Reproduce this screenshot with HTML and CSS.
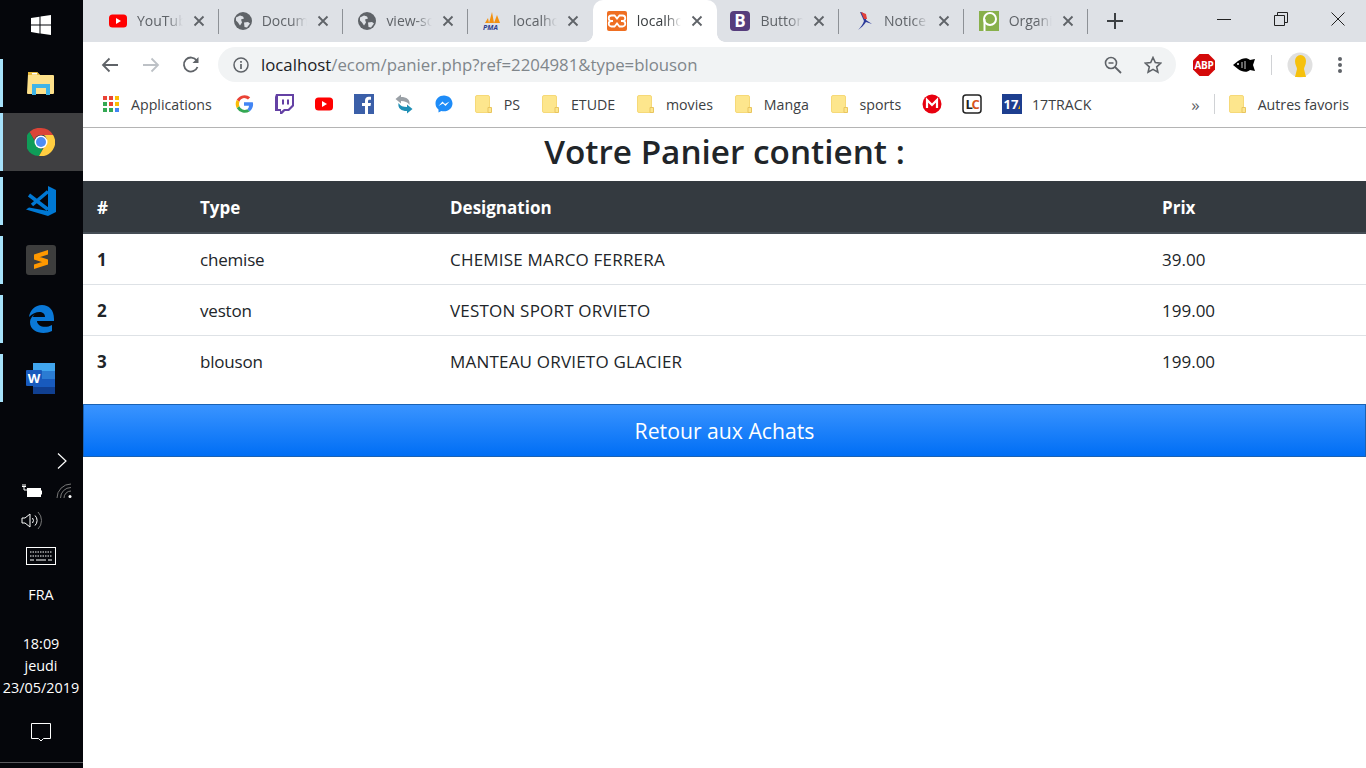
FILE: index.html
```html
<!DOCTYPE html>
<html lang="fr">
<head>
    <meta charset="UTF-8">
    <meta name="viewport" content="width=device-width, initial-scale=1.0">
    <title>Panier</title>
    <link rel="stylesheet" href="styles.css">
</head>
<body>
    <svg class="sprite" aria-hidden="true">
        <symbol id="i-folder" viewBox="0 0 20 20">
            <path d="M3 1.500h11a1.500 1.500 0 0 1 1.500 1.500v14a1.500 1.500 0 0 1-1.500 1.500h-11a1.500 1.500 0 0 1-1.500-1.500v-14a1.500 1.500 0 0 1 1.500-1.500z" fill="#fde68d" stroke="#f6d978"/>
            <path d="M14 13.500h3.500v5h-3.500z" fill="#fde68d" stroke="#e9c55f"/>
        </symbol>
        <symbol id="i-globe" viewBox="0 0 18 18">
            <circle cx="9" cy="9" r="9" fill="#5f6368"/>
            <path d="M2 5.500l4-2 3 1 1 2-3 1 1 3-2 3-2-3-2-2zM10 10.500l4-.5 2 1.500-3 4-2.500-.5z" fill="#dee1e6"/>
        </symbol>
        <symbol id="i-close" viewBox="0 0 12 12">
            <path d="M1.500 1.500l9 9M10.500 1.500l-9 9" stroke="#5f6368" stroke-width="1.800" fill="none"/>
        </symbol>
        <symbol id="i-yt" viewBox="0 0 18 14">
            <rect width="18" height="13" y=".5" rx="3.500" fill="#f00"/>
            <path d="M7 4l5 3-5 3z" fill="#fff"/>
        </symbol>
    </svg>

    <aside class="taskbar">
        <div class="start-btn">
            <svg width="20" height="20" viewBox="0 0 20 20"><path d="M0 3l8.500-1.300v7.900h-8.500zM9.500 1.500l10.500-1.500v9.600h-10.500zM0 10.500h8.500v7.900l-8.500-1.300zM9.500 10.500h10.500v9.500l-10.500-1.500z" fill="#fff"/></svg>
        </div>
        <div class="task-item">
            <svg width="28" height="24" viewBox="0 0 28 24"><path d="M1 3a2 2 0 0 1 2-2h7l3 3h13a1 1 0 0 1 1 1v17a1 1 0 0 1-1 1h-25a1 1 0 0 1-1-1z" fill="#fde08a"/><path d="M1 1h9l3 3h-12z" fill="#e7b93c"/><path d="M5 2h5v1.500h-5z" fill="#fff"/><path d="M5 24v-11l9-0 9 0v11h-4v-7h-10v7z" fill="#3fb4e8"/></svg>
        </div>
        <div class="task-item is-active">
            <svg width="28" height="28" viewBox="0 0 28 28">
                <path d="M14 0a14 14 0 0 1 12.100 7h-12.100a7 7 0 0 0-6.700 5l-4.800-8a14 14 0 0 1 11.500-4z" fill="#db4437"/>
                <path d="M2.500 4l6 10.500a6 6 0 0 0 7.500 6l-4 7.400a14 14 0 0 1-9.500-23.900z" fill="#0f9d58"/>
                <path d="M26.100 7a14 14 0 0 1-14.100 21l6-10.500a7 7 0 0 0-1-10.500z" fill="#ffcd40"/>
                <circle cx="14" cy="14" r="6.500" fill="#fff"/><circle cx="14" cy="14" r="5" fill="#4e8cf5"/>
            </svg>
        </div>
        <div class="task-item">
            <svg width="30" height="30" viewBox="0 0 30 30"><path d="M22 0l8 4v22l-8 4-22-6.500 3-2 19 3.500z" fill="#0078d4"/><path d="M22 5.500l-16 13.500M3 9l19 14.500" fill="none" stroke="#0078d4" stroke-width="3.500"/></svg>
        </div>
        <div class="task-item">
            <svg width="30" height="30" viewBox="0 0 30 30"><rect width="30" height="30" rx="3" fill="#3d3d3d"/><path d="M22 5v4.500l-14 4.500v-4.500zM8 10l14 4.500v4.500l-14-4.500zM22 15v4.500l-14 4.500v-4.500z" fill="#ff9800"/></svg>
        </div>
        <div class="task-item">
            <svg width="26" height="28" viewBox="0 0 26 28"><path d="M1 12c1-7 6-12 13-12 7 0 12 5 12 14v2h-17c0 5 8 8 15 4v6c-8 4-22 2-22-9 0-3 2-6 5-8-1 1-2 2-2 3h12c0-6-9-7-16 0z" fill="#0a78d7"/></svg>
        </div>
        <div class="task-item">
            <svg width="30" height="31" viewBox="0 0 30 31"><path d="M7 0h22v8h-22z" fill="#41a5ee"/><path d="M7 8h22v8h-22z" fill="#2b7cd3"/><path d="M7 16h22v8h-22z" fill="#185abd"/><path d="M7 24h22v7h-22z" fill="#103f91"/><rect y="7" width="16" height="16" rx="1" fill="#185abd"/><text x="8" y="20" class="word-letter">W</text></svg>
        </div>

        <div class="tray">
            <svg class="tray-chevron" width="10" height="16" viewBox="0 0 10 16"><path d="M1 .5l8 7.500-8 7.500" stroke="#fff" fill="none" stroke-width="1.200"/></svg>
            <div class="tray-row">
                <svg width="20" height="14" viewBox="0 0 20 14"><path d="M0 2.500h4M1 0v2.500M3 0v2.500M2 3v3h3" stroke="#fff" fill="none"/><rect x="5.500" y="4.500" width="13" height="8" fill="#fff" stroke="#fff"/><rect x="19" y="6.500" width="1" height="4" fill="#fff"/></svg>
                <svg width="18" height="16" viewBox="0 0 18 16"><path d="M1 15a14 14 0 0 1 14-14M4.500 15a10.500 10.500 0 0 1 10.500-10.500M8 15a7 7 0 0 1 7-7" stroke="#777" fill="none"/><circle cx="14" cy="13.500" r="1.500" fill="#fff"/></svg>
            </div>
            <div class="tray-row">
                <svg width="22" height="20" viewBox="0 0 22 20"><path d="M1 7h3l5-4v13l-5-4h-3zM11.500 7a4 4 0 0 1 0 5M14 4.500a7 7 0 0 1 0 10" stroke="#fff" fill="none"/><path d="M17 1a12 12 0 0 1 0 17" stroke="#777" fill="none"/></svg>
            </div>
            <svg class="tray-keyboard" width="30" height="18" viewBox="0 0 30 18"><rect x=".5" y=".5" width="29" height="17" fill="none" stroke="#fff"/><path d="M4 5h22M4 9h22" stroke="#fff" stroke-dasharray="1.500 1"/><path d="M4 13h4M10 13h10M22 13h4" stroke="#fff"/></svg>
            <div class="tray-lang">FRA</div>
            <div class="tray-clock">18:09<br>jeudi<br>23/05/2019</div>
            <svg class="tray-notif" width="20" height="19" viewBox="0 0 20 19"><path d="M.5.500h19v15h-7l-2.500 2.500-2.500-2.500h-7z" fill="none" stroke="#fff"/></svg>
        </div>
        <div class="taskbar-end"></div>
    </aside>

    <div class="browser">
        <div class="tabstrip">
            <div class="tab">
                <svg class="favicon" width="18" height="14"><use href="#i-yt"/></svg>
                <span class="tab-title">YouTube</span>
                <svg class="tab-close" width="12" height="12"><use href="#i-close"/></svg>
            </div>
            <div class="tab">
                <svg class="favicon" width="18" height="18"><use href="#i-globe"/></svg>
                <span class="tab-title">Document</span>
                <svg class="tab-close" width="12" height="12"><use href="#i-close"/></svg>
            </div>
            <div class="tab">
                <svg class="favicon" width="18" height="18"><use href="#i-globe"/></svg>
                <span class="tab-title">view-source</span>
                <svg class="tab-close" width="12" height="12"><use href="#i-close"/></svg>
            </div>
            <div class="tab no-sep">
                <svg class="favicon" width="20" height="18" viewBox="0 0 20 18"><path d="M2 11l3-5 1 5 3-11 2 11 3-8 3 8z" fill="#f29111"/><text x="0" y="18" class="pma-text">PMA</text></svg>
                <span class="tab-title">localhost</span>
                <svg class="tab-close" width="12" height="12"><use href="#i-close"/></svg>
            </div>
            <div class="tab is-active">
                <svg class="favicon" width="20" height="20" viewBox="0 0 20 20"><rect width="20" height="20" rx="2" fill="#ef6f22"/><path d="M4.500 4.500h3l2.500 3 2.500-3h3a2 2 0 0 1 0 5.500l-1.500 0 1.500 0a2 2 0 0 1 0 5.500h-3l-2.500-3-2.500 3h-3a2 2 0 0 1 0-5.500h1.500-1.500a2 2 0 0 1 0-5.500z" fill="none" stroke="#fff" stroke-width="1.800"/></svg>
                <span class="tab-title">localhost</span>
                <svg class="tab-close" width="12" height="12"><use href="#i-close"/></svg>
            </div>
            <div class="tab tab-short">
                <svg class="favicon" width="20" height="20" viewBox="0 0 20 20"><rect width="20" height="20" rx="4" fill="#563d7c"/><text x="10" y="16" class="bs-text">B</text></svg>
                <span class="tab-title">Buttons</span>
                <svg class="tab-close" width="12" height="12"><use href="#i-close"/></svg>
            </div>
            <div class="tab">
                <svg class="favicon" width="20" height="20" viewBox="0 0 20 20"><path d="M6 1c4 0 7 4 6 8l6 4-6-2c-2 3-5 6-8 8 3-3 5-6 6-9z" fill="#2b3a9a"/><path d="M7 1l5 2 1 5-3 0z" fill="#e2413a"/></svg>
                <span class="tab-title">Notice</span>
                <svg class="tab-close" width="12" height="12"><use href="#i-close"/></svg>
            </div>
            <div class="tab">
                <svg class="favicon" width="20" height="20" viewBox="0 0 20 20"><rect width="20" height="20" fill="#88b04b"/><circle cx="11" cy="8" r="6" fill="none" stroke="#fff" stroke-width="2"/><path d="M5.500 8v12" stroke="#fff" stroke-width="2"/></svg>
                <span class="tab-title">Organiser</span>
                <svg class="tab-close" width="12" height="12"><use href="#i-close"/></svg>
            </div>
            <svg class="new-tab" width="16" height="16" viewBox="0 0 16 16"><path d="M8 0v16M0 8h16" stroke="#3c4043" stroke-width="2"/></svg>
            <div class="win-controls">
                <svg width="14" height="14" viewBox="0 0 14 14"><path d="M0 7.500h14" stroke="#222"/></svg>
                <svg width="14" height="14" viewBox="0 0 14 14"><path d="M.5 3.500h10v10h-10zM3.500 3.500v-3h10v10h-3" fill="none" stroke="#222"/></svg>
                <svg width="14" height="14" viewBox="0 0 14 14"><path d="M.5.500l13 13M13.500.500l-13 13" stroke="#222"/></svg>
            </div>
        </div>

        <div class="toolbar">
            <div class="nav-btns">
                <svg width="18" height="16" viewBox="0 0 18 16"><path d="M17 8h-15M8.500 1.500l-6.500 6.500 6.500 6.500" fill="none" stroke="#5f6368" stroke-width="1.800"/></svg>
                <svg width="18" height="16" viewBox="0 0 18 16"><path d="M1 8h15M9.500 1.500l6.500 6.500-6.500 6.500" fill="none" stroke="#bdc1c6" stroke-width="1.800"/></svg>
                <svg width="18" height="18" viewBox="0 0 18 18"><path d="M15.500 11a7 7 0 1 1-.8-6.500" fill="none" stroke="#5f6368" stroke-width="1.800"/><path d="M16.500 1v6h-6z" fill="#5f6368"/></svg>
            </div>
            <div class="omnibox">
                <svg class="omni-info" width="16" height="16" viewBox="0 0 16 16"><circle cx="8" cy="8" r="7" fill="none" stroke="#5f6368" stroke-width="1.500"/><path d="M8 7v5M8 4v1.700" stroke="#5f6368" stroke-width="1.700"/></svg>
                <div class="omni-url"><span class="url-host">localhost</span>/ecom/panier.php?ref=2204981&amp;type=blouson</div>
                <svg width="18" height="18" viewBox="0 0 18 18"><circle cx="7" cy="7" r="5.500" fill="none" stroke="#5f6368" stroke-width="1.600"/><path d="M11 11l6 6" stroke="#5f6368" stroke-width="1.800"/><path d="M4.500 7h5" stroke="#5f6368" stroke-width="1.500"/></svg>
                <svg class="omni-star" width="18" height="18" viewBox="0 0 18 18"><path d="M9 1.500l2.300 5 5.500.6-4.100 3.700 1.200 5.400-4.900-2.800-4.900 2.800 1.200-5.400-4.100-3.700 5.500-.6z" fill="none" stroke="#5f6368" stroke-width="1.600"/></svg>
            </div>
            <div class="ext-btns">
                <svg width="22" height="22" viewBox="0 0 22 22"><path d="M6.500 0h9l6.500 6.500v9l-6.500 6.500h-9l-6.500-6.500v-9z" fill="#d40a0a"/><text x="11" y="15" class="abp-text">ABP</text></svg>
                <svg class="ext-fish" width="22" height="14" viewBox="0 0 22 14"><path d="M0 7l5-4c4-3 9-4 12-1l5-1-2 6 2 6-5-1c-3 3-8 2-12-1z" fill="#000"/><circle cx="5" cy="6" r="1" fill="#fff"/><path d="M9 4v6M12 3v8" stroke="#fff" stroke-width=".8"/></svg>
                <span class="ext-sep"></span>
                <svg class="ext-avatar" width="26" height="26" viewBox="0 0 26 26"><circle cx="13" cy="13" r="12.500" fill="#e0e0e0"/><path d="M8 9a5.500 6 0 0 1 11 0c0 4-2 6-2 8l2 8h-11l2-8c0-2-2-4-2-8z" fill="#f6c10d"/></svg>
                <svg class="ext-menu" width="4" height="18" viewBox="0 0 4 18"><circle cx="2" cy="3" r="2" fill="#5f6368"/><circle cx="2" cy="9" r="2" fill="#5f6368"/><circle cx="2" cy="15" r="2" fill="#5f6368"/></svg>
            </div>
        </div>

        <div class="bookmarks">
            <div class="bm">
                <svg class="bm-icon" width="20" height="18" viewBox="0 0 20 18"><g><rect x="2" y="1" width="4" height="4" fill="#ea4335"/><rect x="8" y="1" width="4" height="4" fill="#ea4335"/><rect x="14" y="1" width="4" height="4" fill="#fbbc05"/><rect x="2" y="7" width="4" height="4" fill="#34a853"/><rect x="8" y="7" width="4" height="4" fill="#ea4335"/><rect x="14" y="7" width="4" height="4" fill="#fbbc05"/><rect x="2" y="13" width="4" height="4" fill="#34a853"/><rect x="8" y="13" width="4" height="4" fill="#34a853"/><rect x="14" y="13" width="4" height="4" fill="#4285f4"/></g></svg>
                <span>Applications</span>
            </div>
            <svg class="bm-icon" width="20" height="20" viewBox="0 0 20 20"><path d="M10 4a6 6 0 0 1 4 1.500l2.200-2.200a9 9 0 0 0-13.400 2.500l2.600 2a5.500 5.500 0 0 1 4.600-3.800z" fill="#ea4335"/><path d="M2.800 5.800a9 9 0 0 0 0 8.400l2.600-2a5.500 5.500 0 0 1 0-4.400z" fill="#fbbc05"/><path d="M2.800 14.200a9 9 0 0 0 13 3l-2.500-2a5.500 5.500 0 0 1-7.900-3z" fill="#34a853"/><path d="M15.800 17.200a9 9 0 0 0 3-9h-8.800v3.500h5a4.500 4.500 0 0 1-1.700 3.500z" fill="#4285f4"/></svg>
            <svg class="bm-icon" width="20" height="20" viewBox="0 0 20 20"><path d="M2 0h18v12l-5 5h-4l-3 3h-2v-3h-5v-14z" fill="#6441a4"/><path d="M4 2h14v9l-4 4h-4l-3 2.500v-2.500h-3z" fill="#fff"/><path d="M9 5.500v5M14 5.500v5" stroke="#6441a4" stroke-width="2"/></svg>
            <svg class="bm-icon" width="20" height="14" viewBox="0 0 18 14"><use href="#i-yt"/></svg>
            <svg class="bm-icon" width="20" height="20" viewBox="0 0 20 20"><rect width="20" height="20" fill="#3b5fa8"/><path d="M11 20v-8h-3v-3h3v-2.500c0-2.500 1.500-3.800 3.700-3.800h2.300v3h-1.500c-1.200 0-1.500.6-1.500 1.500v1.800h3l-.5 3h-2.500v8z" fill="#fff"/></svg>
            <svg class="bm-icon" width="20" height="20" viewBox="0 0 20 20"><path d="M7 3v-2.500l-5.500 4.500 5.500 4.500v-2.500c4 0 6.500 1 8.500 4 1-5.500-3-8-8.500-8z" fill="#9aa0a6"/><path d="M13 17v2.500l5.500-4.500-5.500-4.500v2.500c-4 0-6.500-1-8.500-4-1 5.500 3 8 8.500 8z" fill="#1f8fb5"/></svg>
            <svg class="bm-icon" width="20" height="20" viewBox="0 0 20 20"><path d="M10 1.500c-4.700 0-8.500 3.500-8.500 8 0 2.500 1.100 4.500 3 6v3l2.800-1.500c.8.200 1.700.3 2.700.3 4.700 0 8.500-3.400 8.500-7.800s-3.800-8-8.500-8z" fill="#1e8cf8"/><path d="M4.500 12l4-4.500 2.500 2.500 4.500-2.500-4 4.500-2.500-2.500z" fill="#fff"/></svg>
            <div class="bm"><svg class="bm-icon" width="20" height="20"><use href="#i-folder"/></svg><span>PS</span></div>
            <div class="bm"><svg class="bm-icon" width="20" height="20"><use href="#i-folder"/></svg><span>ETUDE</span></div>
            <div class="bm"><svg class="bm-icon" width="20" height="20"><use href="#i-folder"/></svg><span>movies</span></div>
            <div class="bm"><svg class="bm-icon" width="20" height="20"><use href="#i-folder"/></svg><span>Manga</span></div>
            <div class="bm"><svg class="bm-icon" width="20" height="20"><use href="#i-folder"/></svg><span>sports</span></div>
            <svg class="bm-icon" width="20" height="20" viewBox="0 0 20 20"><circle cx="10" cy="10" r="9.500" fill="#e8000f"/><path d="M5 14v-8l5 5 5-5v8" fill="none" stroke="#fff" stroke-width="2.200"/></svg>
            <svg class="bm-icon" width="20" height="20" viewBox="0 0 20 20"><rect x="1" y="1" width="18" height="18" rx="3" fill="#fff" stroke="#222" stroke-width="1.500"/><text x="3.500" y="14.500" class="lc-l">L</text><text x="9.500" y="14.500" class="lc-c">C</text></svg>
            <div class="bm">
                <svg class="bm-icon" width="20" height="20" viewBox="0 0 20 20"><rect width="20" height="20" fill="#1d3e8f"/><text x="1.500" y="15" class="track-text">17</text><path d="M16 15l2-4v4z" fill="#f4b400"/></svg>
                <span>17TRACK</span>
            </div>
            <span class="bm-more">»</span>
            <span class="bm-sep"></span>
            <div class="bm"><svg class="bm-icon" width="20" height="20"><use href="#i-folder"/></svg><span>Autres favoris</span></div>
        </div>

        <main class="page">
            <h1 class="page-title">Votre Panier contient :</h1>
            <table class="cart">
                <colgroup>
                    <col class="col-num"><col class="col-type"><col class="col-name"><col class="col-price">
                </colgroup>
                <thead>
                    <tr><th>#</th><th>Type</th><th>Designation</th><th>Prix</th></tr>
                </thead>
                <tbody>
                    <tr><th>1</th><td class="cell-type">chemise</td><td class="cell-name">CHEMISE MARCO FERRERA</td><td>39.00</td></tr>
                    <tr><th>2</th><td class="cell-type">veston</td><td class="cell-name">VESTON SPORT ORVIETO</td><td>199.00</td></tr>
                    <tr><th>3</th><td class="cell-type">blouson</td><td class="cell-name">MANTEAU ORVIETO GLACIER</td><td>199.00</td></tr>
                </tbody>
            </table>
            <a class="btn-back" href="#">Retour aux Achats</a>
        </main>
    </div>
</body>
</html>
```

FILE: styles.css
```css
html, body {
    height: 100%;
    margin: 0;
    padding: 0;
}
body {
    display: flex;
    overflow: hidden;
    font-family: "Open Sans", Arial, sans-serif;
    background-color: #fff;
    color: #212529;
}
svg {
    display: block;
    flex-shrink: 0;
}
.sprite {
    display: none;
}

/* taskbar on the left */
.taskbar {
    width: 83px;
    height: 768px;
    flex-shrink: 0;
    background-color: #05060b;
    color: #fff;
    display: flex;
    flex-direction: column;
}
.start-btn {
    height: 50px;
    margin-bottom: 4px;
    padding-right: 1px;
    display: flex;
    align-items: center;
    justify-content: center;
}
.task-item {
    height: 59px;
    box-sizing: border-box;
    padding: 0 1px 1px 0;
    display: flex;
    align-items: center;
    justify-content: center;
    background: linear-gradient(#a6e1fa, #a6e1fa) no-repeat left 0 top 5px / 3px 48px;
}
.task-item.is-active {
    height: 58px;
    padding-bottom: 0;
    margin-bottom: 1px;
    background: linear-gradient(#a6e1fa, #a6e1fa) no-repeat left top / 3px 100%, #3f3f41;
}
.word-letter {
    font: bold 13px "Open Sans", sans-serif;
    fill: #fff;
    text-anchor: middle;
}
.tray {
    display: flex;
    flex-direction: column;
    align-items: center;
    margin-top: 45px;
    padding-right: 1px;
}
.tray-chevron {
    align-self: flex-end;
    margin-right: 15px;
}
.tray-row {
    display: flex;
    align-items: center;
    gap: 14px;
    align-self: flex-start;
    margin-left: 22px;
    margin-top: 14px;
}
.tray-row + .tray-row {
    margin-left: 21px;
    margin-top: 12px;
}
.tray-keyboard {
    margin-top: 16px;
}
.tray-lang {
    font-size: 14.4px;
    margin-top: 20px;
}
.tray-clock {
    font-size: 14.4px;
    line-height: 22px;
    text-align: center;
    margin-top: 29px;
    white-space: nowrap;
}
.tray-notif {
    margin-top: 24px;
}
.taskbar-end {
    margin-top: auto;
    margin-bottom: 5px;
    height: 1px;
    background-color: #5a5a5e;
}

/* browser window */
.browser {
    flex: 1;
    min-width: 0;
    display: flex;
    flex-direction: column;
}
.tabstrip {
    height: 42px;
    background-color: #dee1e6;
    padding-left: 11px;
    display: flex;
    align-items: center;
}
.tab {
    width: 124.7px;
    height: 42px;
    box-sizing: border-box;
    padding-left: 15px;
    display: flex;
    align-items: center;
    flex-shrink: 0;
    font-size: 14px;
    color: #5f6368;
}
.tab::after {
    content: "";
    width: 1px;
    height: 25px;
    margin-left: 13px;
    flex-shrink: 0;
    background-color: #8d9196;
}
.tab.no-sep::after {
    background-color: transparent;
}
.tab-short {
    width: 121.5px;
    padding-left: 13px;
}
.tab.is-active {
    background-color: #fff;
    border-radius: 10px 10px 0 0;
    color: #3c4043;
    padding-left: 14px;
    position: relative;
}
/* little flares at the foot of the active tab */
.tab.is-active::before,
.tab.is-active::after {
    content: "";
    position: absolute;
    bottom: 0;
    width: 8px;
    height: 8px;
    margin: 0;
}
.tab.is-active::before {
    left: -8px;
    background: radial-gradient(circle at 0 0, transparent 7.5px, #fff 8px);
}
.tab.is-active::after {
    right: -8px;
    background: radial-gradient(circle at 100% 0, transparent 7.5px, #fff 8px);
}
.tab.is-active .tab-close {
    margin-right: 14px;
}
.favicon {
    margin-right: 10px;
}
.tab-title {
    flex: 1;
    min-width: 0;
    margin-top: -2px;
    overflow: hidden;
    white-space: nowrap;
    -webkit-mask-image: linear-gradient(to right, #000 65%, transparent 100%);
    mask-image: linear-gradient(to right, #000 65%, transparent 100%);
}
.tab-close {
    margin-left: 10px;
}
.pma-text {
    font: italic bold 7px "Open Sans", sans-serif;
    fill: #2c3f8f;
}
.bs-text {
    font: bold 17px "Open Sans", sans-serif;
    fill: #fff;
    text-anchor: middle;
}
.new-tab {
    margin-left: 19px;
}
.win-controls {
    margin-left: auto;
    display: flex;
    gap: 43px;
    padding-right: 21px;
    align-self: flex-start;
    margin-top: 12px;
}

.toolbar {
    height: 42px;
    box-sizing: border-box;
    padding-top: 3px;
    background-color: #fff;
    display: flex;
    align-items: center;
}
.nav-btns {
    display: flex;
    align-items: center;
    gap: 23px;
    padding-left: 18px;
    width: 135px;
    box-sizing: border-box;
}
.nav-btns svg:last-child {
    margin-left: -1px;
}
.omnibox {
    width: 958px;
    height: 35px;
    background-color: #f1f3f4;
    border-radius: 18px;
    display: flex;
    align-items: center;
    box-sizing: border-box;
    padding: 0 14px 0 15px;
}
.omni-url {
    flex: 1;
    margin-left: 12px;
    font-size: 16.8px;
    color: #80868b;
    white-space: nowrap;
}
.url-host {
    color: #202124;
}
.omni-star {
    margin-left: 22px;
}
.ext-btns {
    display: flex;
    align-items: center;
    padding-left: 17px;
}
.ext-fish {
    margin-left: 18px;
}
.ext-sep {
    width: 1px;
    height: 20px;
    background-color: #d0d2d5;
    margin-left: 16px;
}
.ext-avatar {
    margin-left: 15px;
}
.ext-menu {
    margin-left: 25px;
}
.abp-text {
    font: bold 10px "Open Sans", sans-serif;
    fill: #fff;
    text-anchor: middle;
    letter-spacing: -.3px;
}

.bookmarks {
    height: 44px;
    box-sizing: border-box;
    border-bottom: 1px solid #b4b4b4;
    background-color: #fff;
    padding: 0 0 3px 18px;
    display: flex;
    align-items: center;
    gap: 20px;
    font-size: 14.2px;
    color: #3c4043;
}
.bm {
    display: flex;
    align-items: center;
    gap: 10px;
    margin-right: .8px;
    white-space: nowrap;
}
.bookmarks .bm:first-child {
    margin-right: 2px;
}
.bm-more {
    margin-left: auto;
    font-size: 17px;
    margin-right: -6px;
    color: #5f6368;
}
.bm-sep {
    width: 1px;
    height: 20px;
    background-color: #d0d2d5;
}
.bookmarks .bm:last-child {
    margin-left: -7px;
    margin-right: 17px;
}
.lc-l, .lc-c {
    font: bold 13px "Open Sans", sans-serif;
    fill: #222;
}
.lc-c {
    fill: #d9541e;
}
.track-text {
    font: bold 13px "Open Sans", sans-serif;
    fill: #fff;
}

/* page content */
.page {
    flex: 1;
    background-color: #fff;
}
.page-title {
    margin: 0;
    height: 53px;
    line-height: 46px;
    font-size: 33.3px;
    font-weight: 600;
    text-align: center;
}
.cart {
    width: 100%;
    table-layout: fixed;
    border-collapse: separate;
    border-spacing: 0;
    font-size: 17px;
    margin-bottom: 18px;
}
.col-num { width: 103px; }
.col-type { width: 250px; }
.col-name { width: 712px; }
.cart th, .cart td {
    padding: 13px 14px 11px;
    height: 26px;
    line-height: 26px;
    text-align: left;
    box-sizing: content-box;
}
.cart thead th {
    padding: 14px 14px 11px;
    background-color: #343a40;
    color: #fff;
    border-bottom: 2px solid #454d55;
}
.cart tbody tr + tr th,
.cart tbody tr + tr td {
    border-top: 1px solid #dee2e6;
}
.cell-type {
    letter-spacing: -.2px;
}
.cell-name {
    letter-spacing: .2px;
}
.btn-back {
    display: block;
    box-sizing: border-box;
    height: 53px;
    line-height: 51px;
    text-align: center;
    font-size: 21.2px;
    color: #fff;
    text-decoration: none;
    background: linear-gradient(#3a94ff, #006ef5);
    border: 1px solid #1a62b4;
}
```
